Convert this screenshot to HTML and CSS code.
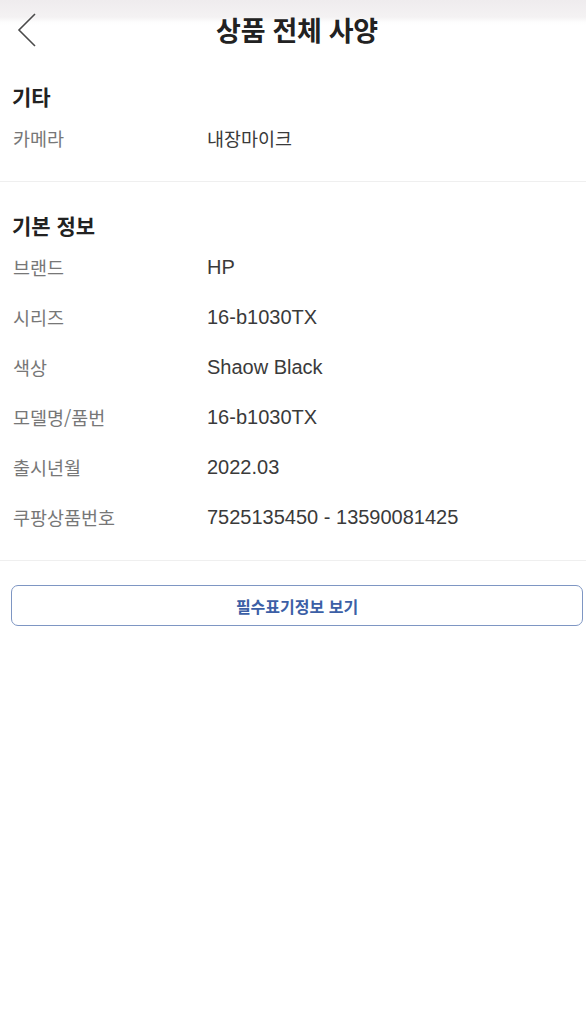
FILE: index.html
```html
<!DOCTYPE html>
<html lang="ko">
<head>
<meta charset="utf-8">
<link rel="stylesheet" href="styles.css">
</head>
<body>
<header class="header">
  <svg class="back" width="20" height="34" viewBox="0 0 20 34"><path d="M18 1 L2 17 L18 33" fill="none" stroke="#4a4a4a" stroke-width="1.6"/></svg>
  <h1 class="title">상품 전체 사양</h1>
</header>
<section class="section first">
  <h2 class="sec-title">기타</h2>
  <div class="row"><span class="label">카메라</span><span class="value ko">내장마이크</span></div>
</section>
<section class="section">
  <h2 class="sec-title">기본 정보</h2>
  <div class="row"><span class="label">브랜드</span><span class="value">HP</span></div>
  <div class="row"><span class="label">시리즈</span><span class="value">16-b1030TX</span></div>
  <div class="row"><span class="label">색상</span><span class="value">Shaow Black</span></div>
  <div class="row"><span class="label">모델명/품번</span><span class="value">16-b1030TX</span></div>
  <div class="row"><span class="label">출시년월</span><span class="value">2022.03</span></div>
  <div class="row"><span class="label">쿠팡상품번호</span><span class="value">7525135450 - 13590081425</span></div>
</section>
<div class="btn-wrap"><button class="btn">필수표기정보 보기</button></div>
</body>
</html>
```
FILE: styles.css
```css
* { box-sizing: border-box; }
body {
  margin: 0;
  background: #fff;
  font-family: "Liberation Sans", "Noto Sans CJK KR", sans-serif;
  color: #333;
}
.header {
  position: relative;
  height: 60px;
  display: flex;
  align-items: center;
  justify-content: center;
  background: linear-gradient(#efecee 0, #f4f2f3 17px, #fdfdfd 22px, #fff 26px);
}
.back {
  position: absolute;
  left: 17px;
  top: 13px;
}
.title {
  margin: 0 0 0 8px;
  font-family: "Noto Sans CJK KR", sans-serif;
  font-size: 27px;
  font-weight: 700;
  color: #222;
  letter-spacing: -0.3px;
  line-height: 36px;
}
.section {
  padding: 26px 0 18px 0;
  border-bottom: 1px solid #efefef;
}
.section.first { padding-top: 19px; }
.sec-title {
  margin: 0 0 0 12px;
  font-family: "Noto Sans CJK KR", sans-serif;
  font-size: 21px;
  font-weight: 700;
  color: #222;
  line-height: 34px;
}
.row {
  display: flex;
  height: 50px;
  align-items: center;
  font-size: 20px;
  line-height: 26px;
}
.label {
  width: 207px;
  padding-left: 13px;
  color: #777;
  font-family: "Noto Sans CJK KR", sans-serif;
  font-size: 18.5px;
}
.value {
  color: #3a3a3a;
  font-family: "Liberation Sans", "Noto Sans CJK KR", sans-serif;
}
.value.ko {
  font-family: "Noto Sans CJK KR", sans-serif;
  font-size: 18.5px;
}
.btn-wrap { padding: 24px 3px 0 11px; }
.btn {
  display: block;
  width: 100%;
  height: 41px;
  background: #fff;
  border: 1.5px solid #7e96c3;
  border-radius: 7px;
  font-family: "Noto Sans CJK KR", sans-serif;
  font-size: 16px;
  font-weight: 700;
  color: #3c5fa6;
}
```
